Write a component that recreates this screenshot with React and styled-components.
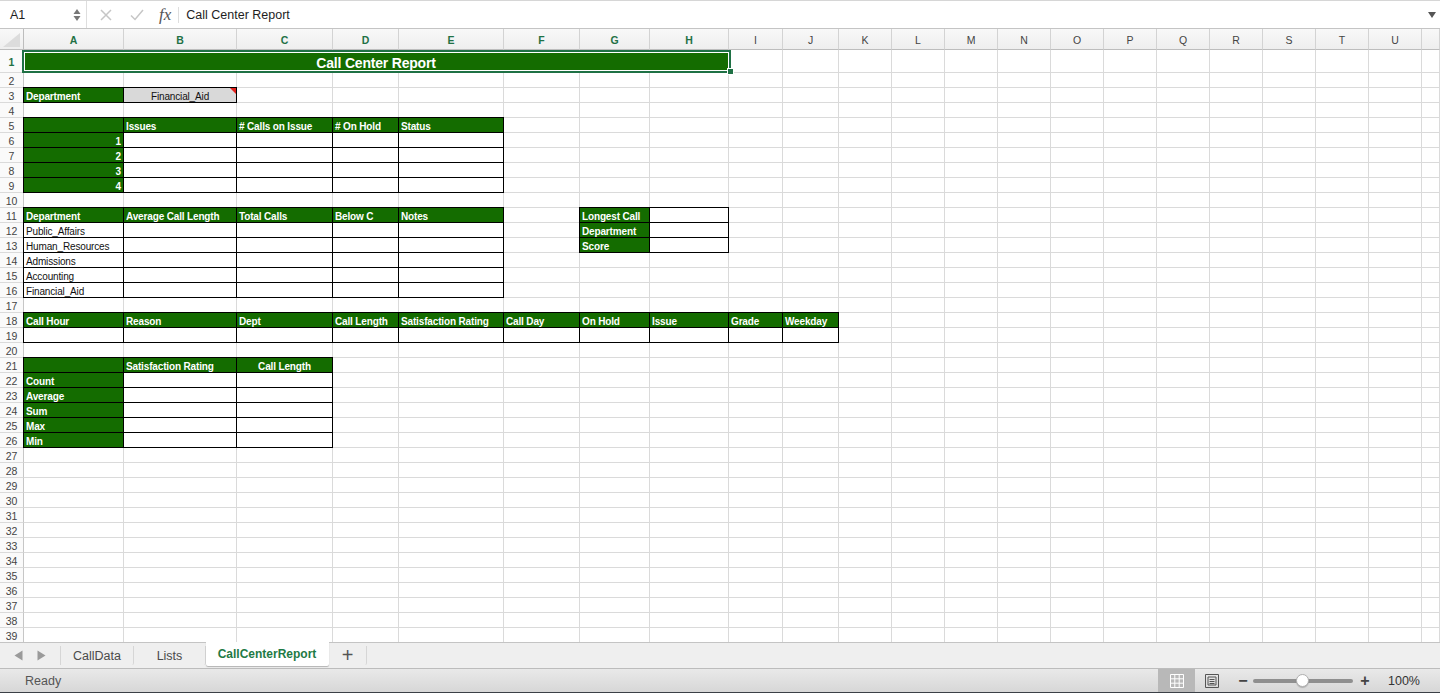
import React from "react";
import styled, { createGlobalStyle } from "styled-components";

const GREEN = "#146c00";
const SELECT = "#1f7145";
const GRID = "#dadada";

// column letters and their pixel widths (V takes what is left)
const COLUMNS = [
  ["A", 100], ["B", 113], ["C", 96], ["D", 66], ["E", 105], ["F", 76],
  ["G", 70], ["H", 79], ["I", 54], ["J", 56], ["K", 53], ["L", 53],
  ["M", 53], ["N", 53], ["O", 53], ["P", 53], ["Q", 53], ["R", 53],
  ["S", 53], ["T", 53], ["U", 53],
];
const LETTERS = [...COLUMNS.map(([l]) => l), "V"];
const TEMPLATE = `24px ${COLUMNS.map(([, w]) => `${w}px`).join(" ")} 1fr`;
const SELECTED_COLS = ["A", "B", "C", "D", "E", "F", "G", "H"];
const ROW_COUNT = 39;

// ---- cell contents ----
const cells = {};
const put = (ref, props) => {
  cells[ref] = props;
};
const heads = (row, start, labels) => {
  const from = LETTERS.indexOf(start);
  labels.forEach((text, i) => put(`${LETTERS[from + i]}${row}`, { kind: "head", text }));
};
const boxes = (rows, cols) => {
  rows.forEach((r) => cols.forEach((c) => put(`${c}${r}`, { kind: "box" })));
};

put("A1", { kind: "title", text: "Call Center Report", span: 8, align: "center" });
put("A3", { kind: "head", text: "Department" });
put("B3", { kind: "pick", text: "Financial_Aid", align: "center" });

heads(5, "A", ["", "Issues", "# Calls on Issue", "# On Hold", "Status"]);
[6, 7, 8, 9].forEach((r, i) => put(`A${r}`, { kind: "head", text: String(i + 1), align: "right" }));
boxes([6, 7, 8, 9], ["B", "C", "D", "E"]);

heads(11, "A", ["Department", "Average Call Length", "Total Calls", "Below C", "Notes"]);
["Public_Affairs", "Human_Resources", "Admissions", "Accounting", "Financial_Aid"].forEach((text, i) =>
  put(`A${12 + i}`, { kind: "box", text })
);
boxes([12, 13, 14, 15, 16], ["B", "C", "D", "E"]);

heads(11, "G", ["Longest Call"]);
heads(12, "G", ["Department"]);
heads(13, "G", ["Score"]);
boxes([11, 12, 13], ["H"]);

heads(18, "A", [
  "Call Hour", "Reason", "Dept", "Call Length", "Satisfaction Rating",
  "Call Day", "On Hold", "Issue", "Grade", "Weekday",
]);
boxes([19], ["A", "B", "C", "D", "E", "F", "G", "H", "I", "J"]);

heads(21, "A", ["", "Satisfaction Rating"]);
put("C21", { kind: "head", text: "Call Length", align: "center" });
["Count", "Average", "Sum", "Max", "Min"].forEach((text, i) => put(`A${22 + i}`, { kind: "head", text }));
boxes([22, 23, 24, 25, 26], ["B", "C"]);

// ---- styles ----
const GlobalStyle = createGlobalStyle`
  html, body { margin: 0; padding: 0; background: #fff; }
  body { font-family: "Liberation Sans", Arial, sans-serif; overflow: hidden; }
  * { box-sizing: border-box; }
`;

const Window = styled.div`
  width: 1440px;
  height: 693px;
  display: flex;
  flex-direction: column;
  overflow: hidden;
`;

const FormulaBar = styled.div`
  height: 29px;
  flex: none;
  display: flex;
  align-items: center;
  border-top: 1px solid #d6d6d6;
  border-bottom: 1px solid #c4c4c4;
  font-size: 12.5px;
  color: #1e1e1e;
`;

const NameBox = styled.div`
  width: 87px;
  height: 100%;
  display: flex;
  align-items: center;
  justify-content: space-between;
  padding: 0 5px 0 10px;
  border-right: 1px solid #dedede;
`;

const Actions = styled.div`
  display: flex;
  align-items: center;
  gap: 18px;
  padding-left: 13px;
  height: 100%;
`;

const Fx = styled.span`
  font-family: "Liberation Serif", serif;
  font-style: italic;
  font-size: 17px;
  color: #555;
  margin-left: -3px;
  padding-right: 7px;
  border-right: 1px solid #dedede;
  line-height: 16px;
`;

const FormulaText = styled.div`
  flex: 1;
  padding-left: 7px;
`;

const DropArrow = styled.div`
  width: 0;
  height: 0;
  margin-right: 4px;
  border-left: 4px solid transparent;
  border-right: 4px solid transparent;
  border-top: 6px solid #555;
`;

const Sheet = styled.div`
  flex: 1;
  overflow: hidden;
`;

const Row = styled.div`
  display: grid;
  grid-template-columns: ${TEMPLATE};
  grid-template-rows: ${(p) => p.$h}px;
  height: ${(p) => p.$h}px;
`;

const ColHead = styled.div`
  background: linear-gradient(#f8f8f8, #eeeeee);
  border-right: 1px solid #d3d3d3;
  border-bottom: 1px solid #bdbdbd;
  display: flex;
  align-items: center;
  justify-content: center;
  padding-top: 1px;
  font-size: 10.5px;
  color: ${(p) => (p.$on ? SELECT : "#444")};
  font-weight: ${(p) => (p.$on ? 700 : 400)};
`;

const Corner = styled(ColHead)`
  justify-content: flex-end;
  align-items: flex-end;
  padding: 0 3px 2px 0;
  border-right-color: #bdbdbd;
`;

const RowHead = styled.div`
  background: #fafafa;
  border-right: 1px solid #c6c6c6;
  border-bottom: 1px solid ${GRID};
  display: flex;
  align-items: center;
  justify-content: center;
  padding-top: 2px;
  font-size: 10.5px;
  color: ${(p) => (p.$on ? SELECT : "#444")};
  font-weight: ${(p) => (p.$on ? 700 : 400)};
`;

const fills = { head: GREEN, pick: "#d9d9d9", title: GREEN };
const boxed = (k) => k === "head" || k === "box" || k === "pick";

const Cell = styled.div`
  grid-column: span ${(p) => p.$span || 1};
  position: ${(p) => (p.$kind === "title" || p.$kind === "pick" ? "relative" : "static")};
  min-height: 0;
  background: ${(p) => fills[p.$kind] || "transparent"};
  border-right: 1px solid ${(p) => (boxed(p.$kind) ? "#000" : p.$kind === "title" ? GREEN : GRID)};
  border-bottom: 1px solid ${(p) => (boxed(p.$kind) ? "#000" : GRID)};
  box-shadow: ${(p) => (boxed(p.$kind) ? "-1px 0 0 #000, 0 -1px 0 #000, -1px -1px 0 #000" : "none")};
  color: ${(p) => (p.$kind === "head" || p.$kind === "title" ? "#fff" : "#111")};
  font-weight: ${(p) => (p.$kind === "head" || p.$kind === "title" ? 700 : 400)};
  font-size: ${(p) => (p.$kind === "title" ? "14px" : "10px")};
  letter-spacing: ${(p) => (p.$kind === "title" ? "-0.2px" : "-0.15px")};
  line-height: ${(p) => (p.$kind === "title" ? "22px" : "15px")};
  text-align: ${(p) => p.$align || "left"};
  padding: ${(p) => (p.$kind === "title" ? "2px 2px 0" : "1px 2px 0")};
  white-space: nowrap;
`;

// selection frame and fill handle over the merged title cell
const Selection = styled.div`
  position: absolute;
  top: 0;
  left: -2px;
  right: -3px;
  bottom: -1px;
  border: 2px solid ${SELECT};
  box-shadow: inset 0 0 0 1px #fff;
  z-index: 2;
`;

const FillHandle = styled.div`
  position: absolute;
  right: -5px;
  bottom: -4px;
  width: 7px;
  height: 7px;
  background: ${SELECT};
  border: 1px solid #fff;
`;

const CommentMark = styled.div`
  position: absolute;
  top: 0;
  right: 0;
  width: 0;
  height: 0;
  border-top: 6px solid #e2211c;
  border-left: 6px solid transparent;
`;

const TabBar = styled.div`
  height: 26px;
  flex: none;
  display: flex;
  align-items: stretch;
  background: #efefef;
  border-top: 1px solid #c4c4c4;
  font-size: 12.5px;
  color: #4a4a4a;
`;

const NavArrows = styled.div`
  width: 61px;
  display: flex;
  align-items: center;
  justify-content: center;
  gap: 14px;
  border-right: 1px solid #d6d6d6;
  margin: 3px 0;
`;

const Tab = styled.div`
  width: ${(p) => p.$w}px;
  display: flex;
  align-items: center;
  justify-content: center;
  background: ${(p) => (p.$active ? "#fff" : "transparent")};
  color: ${(p) => (p.$active ? "#1e7a45" : "#4a4a4a")};
  font-weight: ${(p) => (p.$active ? 700 : 400)};
  font-size: ${(p) => (p.$active ? "12px" : "12.5px")};
  border-right: 1px solid ${(p) => (p.$active ? "transparent" : "#d6d6d6")};
  margin: ${(p) => (p.$active ? "-1px 0 2px" : "3px 0")};
  box-shadow: ${(p) => (p.$active ? "0 1px 1px rgba(0,0,0,0.25)" : "none")};
  border-radius: 0 0 2px 2px;
`;

const AddTab = styled(Tab)`
  font-size: 20px;
  font-weight: 300;
  color: #555;
`;

const StatusBar = styled.div`
  height: 25px;
  flex: none;
  display: flex;
  align-items: stretch;
  background: linear-gradient(#e9e9e9, #d7d7d7);
  border-top: 1px solid #bcbcbc;
  border-bottom: 1px solid #3b3f46;
  font-size: 12.5px;
  color: #555;
`;

const Ready = styled.div`
  flex: 1;
  display: flex;
  align-items: center;
  padding-left: 25px;
`;

const ViewButton = styled.div`
  width: ${(p) => p.$w}px;
  display: flex;
  align-items: center;
  justify-content: center;
  background: ${(p) => (p.$active ? "#b8b8b8" : "transparent")};
`;

const Zoom = styled.div`
  display: flex;
  align-items: center;
  padding-left: 9px;
  width: 212px;
`;

const ZoomSign = styled.span`
  font-size: 16px;
  color: #444;
  font-weight: 700;
  width: 12px;
  text-align: center;
  margin: ${(p) => p.$m};
`;

const Track = styled.div`
  position: relative;
  width: 100px;
  height: 4px;
  border-radius: 2px;
  background: #8f8f8f;
`;

const Knob = styled.div`
  position: absolute;
  left: 43px;
  top: -5px;
  width: 13px;
  height: 13px;
  border-radius: 50%;
  background: #fff;
  border: 1px solid #b0b0b0;
  box-shadow: 0 1px 1px rgba(0, 0, 0, 0.2);
`;

const Percent = styled.span`
  margin-left: 17px;
  color: #333;
`;

// ---- icons ----
const Stepper = () => (
  <svg width="8" height="14" viewBox="0 0 8 14">
    <path d="M4 1 L7.5 6 H0.5 Z" fill="#777" />
    <path d="M4 13 L7.5 8 H0.5 Z" fill="#777" />
  </svg>
);

const Cross = () => (
  <svg width="12" height="12" viewBox="0 0 12 12">
    <path d="M1 1 L11 11 M11 1 L1 11" stroke="#c6c6c6" strokeWidth="1.5" />
  </svg>
);

const Check = () => (
  <svg width="14" height="12" viewBox="0 0 14 12">
    <path d="M1 6.5 L5 10.5 L13 1" stroke="#c6c6c6" strokeWidth="1.5" fill="none" />
  </svg>
);

const CornerMark = () => (
  <svg width="17" height="14" viewBox="0 0 17 14">
    <path d="M17 0 V14 H0 Z" fill="#dcdcdc" />
  </svg>
);

const Arrow = ({ dir }) => (
  <svg width="9" height="11" viewBox="0 0 9 11">
    <path d={dir === "left" ? "M0.5 5.5 L8.5 0.5 V10.5 Z" : "M8.5 5.5 L0.5 0.5 V10.5 Z"} fill="#9a9a9a" />
  </svg>
);

const GridIcon = () => (
  <svg width="14" height="14" viewBox="0 0 14 14">
    <path
      d="M0.5 0.5 H13.5 V13.5 H0.5 Z M0.5 4.8 H13.5 M0.5 9.2 H13.5 M4.8 0.5 V13.5 M9.2 0.5 V13.5"
      stroke="#fff"
      fill="none"
    />
  </svg>
);

const PageIcon = () => (
  <svg width="14" height="14" viewBox="0 0 14 14">
    <path d="M0.5 0.5 H13.5 V13.5 H0.5 Z" stroke="#555" fill="none" />
    <path d="M3 3 H11 V11 H3 Z" stroke="#555" fill="none" />
    <path d="M4.5 5.5 H9.5 M4.5 7.5 H9.5 M4.5 9.5 H9.5" stroke="#555" />
  </svg>
);

// ---- rows ----
const SheetRow = ({ r }) => {
  const out = [];
  for (let i = 0; i < LETTERS.length; i++) {
    const ref = `${LETTERS[i]}${r}`;
    const c = cells[ref] || {};
    out.push(
      <Cell key={ref} $kind={c.kind} $align={c.align} $span={c.span}>
        {c.text}
        {c.kind === "title" && (
          <Selection>
            <FillHandle />
          </Selection>
        )}
        {c.kind === "pick" && <CommentMark />}
      </Cell>
    );
    if (c.span) i += c.span - 1;
  }
  return (
    <Row $h={r === 1 ? 23 : 15}>
      <RowHead $on={r === 1}>{r}</RowHead>
      {out}
    </Row>
  );
};

export default function App() {
  const rows = Array.from({ length: ROW_COUNT }, (_, i) => i + 1);
  return (
    <Window>
      <GlobalStyle />
      <FormulaBar>
        <NameBox>
          <span>A1</span>
          <Stepper />
        </NameBox>
        <Actions>
          <Cross />
          <Check />
          <Fx>fx</Fx>
        </Actions>
        <FormulaText>Call Center Report</FormulaText>
        <DropArrow />
      </FormulaBar>

      <Sheet>
        <Row $h={21}>
          <Corner>
            <CornerMark />
          </Corner>
          {LETTERS.map((l) => (
            <ColHead key={l} $on={SELECTED_COLS.includes(l)}>
              {l === "V" ? "" : l}
            </ColHead>
          ))}
        </Row>
        {rows.map((r) => (
          <SheetRow key={r} r={r} />
        ))}
      </Sheet>

      <TabBar>
        <NavArrows>
          <Arrow dir="left" />
          <Arrow dir="right" />
        </NavArrows>
        <Tab $w={73}>CallData</Tab>
        <Tab $w={72}>Lists</Tab>
        <Tab $w={123} $active>
          CallCenterReport
        </Tab>
        <AddTab $w={38}>+</AddTab>
      </TabBar>

      <StatusBar>
        <Ready>Ready</Ready>
        <ViewButton $w={37} $active>
          <GridIcon />
        </ViewButton>
        <ViewButton $w={33}>
          <PageIcon />
        </ViewButton>
        <Zoom>
          <ZoomSign $m="0 4px 0 0">−</ZoomSign>
          <Track>
            <Knob />
          </Track>
          <ZoomSign $m="0 0 0 6px">+</ZoomSign>
          <Percent>100%</Percent>
        </Zoom>
      </StatusBar>
    </Window>
  );
}
